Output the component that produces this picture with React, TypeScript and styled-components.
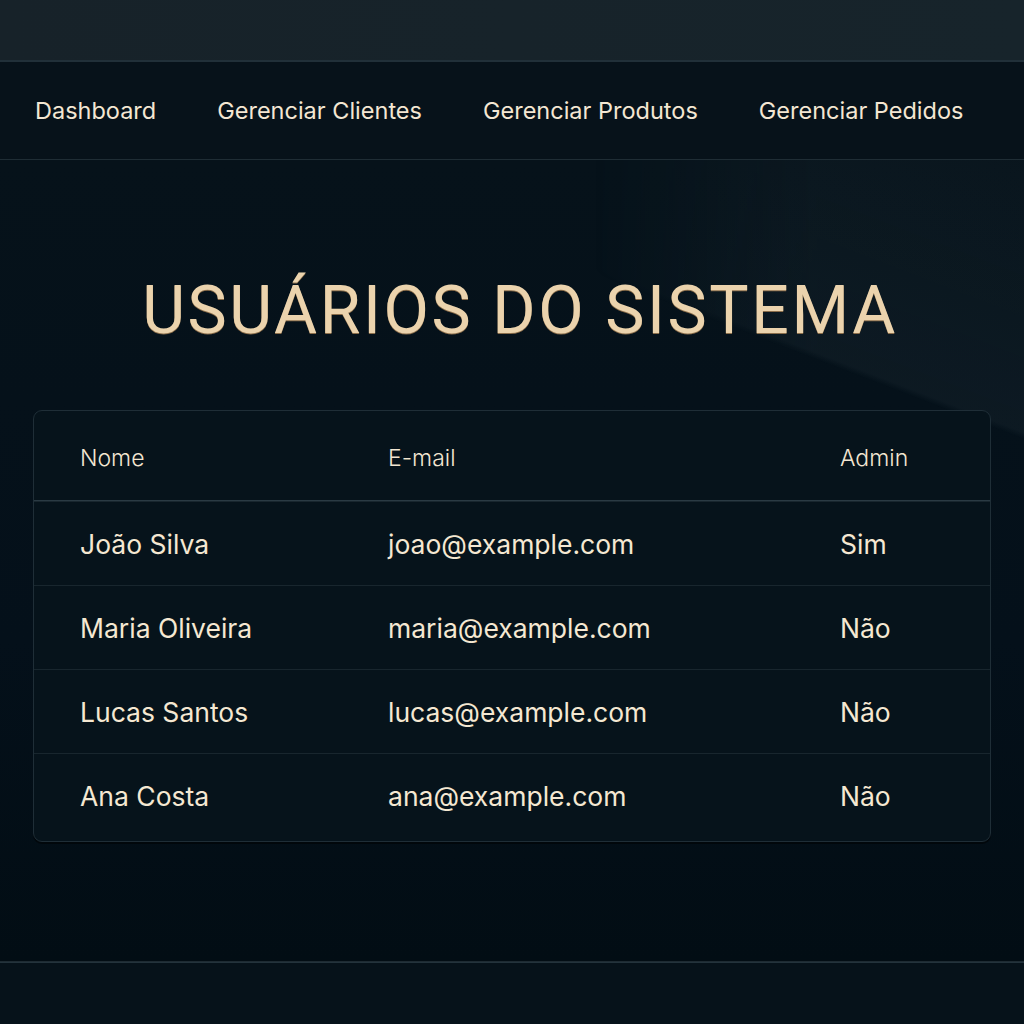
import React from "react";
import styled, { createGlobalStyle } from "styled-components";

const Global = createGlobalStyle`
  html, body { margin: 0; padding: 0; background: #04101a; }
  body { font-family: Inter, "Noto Sans", sans-serif; }
  * { box-sizing: border-box; }
`;

const Page = styled.div`
  width: 1024px;
  height: 1024px;
  display: flex;
  flex-direction: column;
  background: #04101a;
  overflow: hidden;
`;

const TopBar = styled.div`
  height: 62px;
  background: linear-gradient(90deg, #172229 0%, #17242b 100%);
  border-bottom: 2px solid #213039;
  flex-shrink: 0;
`;

const Nav = styled.nav`
  height: 98px;
  display: flex;
  align-items: center;
  gap: 61px;
  padding: 0 0 0 35px;
  background: #07121a;
  border-bottom: 1px solid #1f2d35;
  flex-shrink: 0;
`;

const NavLink = styled.a`
  font-size: 23.5px;
  font-weight: 400;
  color: #f4e7d3;
  text-decoration: none;
`;

const Main = styled.main`
  position: relative;
  flex: 1;
  display: flex;
  flex-direction: column;
  align-items: center;
  padding: 118px 33px 0;
  background: linear-gradient(180deg, #06121a 0%, #04101a 60%, #020d14 100%);
  border-bottom: 1px solid #1e2b33;

  &::before {
    content: "";
    position: absolute;
    inset: 0;
    pointer-events: none;
    background: linear-gradient(21deg, transparent 0%, transparent 76.6%, rgba(44, 62, 70, 0.2) 77.2%, rgba(36, 54, 62, 0.12) 100%);
    -webkit-mask-image: linear-gradient(90deg, transparent 58%, #000 80%);
    mask-image: linear-gradient(90deg, transparent 58%, #000 80%);
  }

  & > * {
    position: relative;
  }
`;

const Title = styled.h1`
  margin: 0;
  padding-left: 16px;
  font-family: Roboto, Inter, sans-serif;
  font-size: 66px;
  font-weight: 400;
  line-height: 1;
  letter-spacing: 2.6px;
  color: #ebd3ad;
  text-shadow: 0 1px 0 #8a6d4a;
`;

const Card = styled.div`
  margin-top: 66px;
  width: 958px;
  padding-bottom: 4px;
  border: 1px solid #1f2e37;
  border-radius: 9px;
  background: #06131b;
  box-shadow: 0 2px 0 rgba(0,0,0,0.5);
  overflow: hidden;
`;

const Row = styled.div<{ $head?: boolean }>`
  display: grid;
  grid-template-columns: 308px 452px 1fr;
  align-items: center;
  padding-left: 46px;
  height: ${(p) => (p.$head ? "90px" : "84px")};
  padding-top: ${(p) => (p.$head ? "4px" : "0")};
  border-top: ${(p) => (p.$head ? "none" : "1px solid #18262e")};
  ${(p) => (p.$head ? "border-bottom: 1px solid #2a3a43;" : "")}
`;

const Cell = styled.div<{ $head?: boolean }>`
  font-size: ${(p) => (p.$head ? "23px" : "26.5px")};
  font-weight: ${(p) => (p.$head ? 300 : 400)};
  color: ${(p) => (p.$head ? "#f3e6d2" : "#f5e8d2")};
`;

const Footer = styled.footer`
  height: 62px;
  background: #06121a;
  border-top: 1px solid #23333c;
  flex-shrink: 0;
`;

const users = [
  { name: "João Silva", email: "joao@example.com", admin: "Sim" },
  { name: "Maria Oliveira", email: "maria@example.com", admin: "Não" },
  { name: "Lucas Santos", email: "lucas@example.com", admin: "Não" },
  { name: "Ana Costa", email: "ana@example.com", admin: "Não" },
];

export default function App() {
  return (
    <Page>
      <Global />
      <TopBar />
      <Nav>
        <NavLink>Dashboard</NavLink>
        <NavLink>Gerenciar Clientes</NavLink>
        <NavLink>Gerenciar Produtos</NavLink>
        <NavLink>Gerenciar Pedidos</NavLink>
      </Nav>
      <Main>
        <Title>USUÁRIOS DO SISTEMA</Title>
        <Card>
          <Row $head>
            <Cell $head>Nome</Cell>
            <Cell $head>E-mail</Cell>
            <Cell $head>Admin</Cell>
          </Row>
          {users.map((u) => (
            <Row key={u.email}>
              <Cell>{u.name}</Cell>
              <Cell>{u.email}</Cell>
              <Cell>{u.admin}</Cell>
            </Row>
          ))}
        </Card>
      </Main>
      <Footer />
    </Page>
  );
}
